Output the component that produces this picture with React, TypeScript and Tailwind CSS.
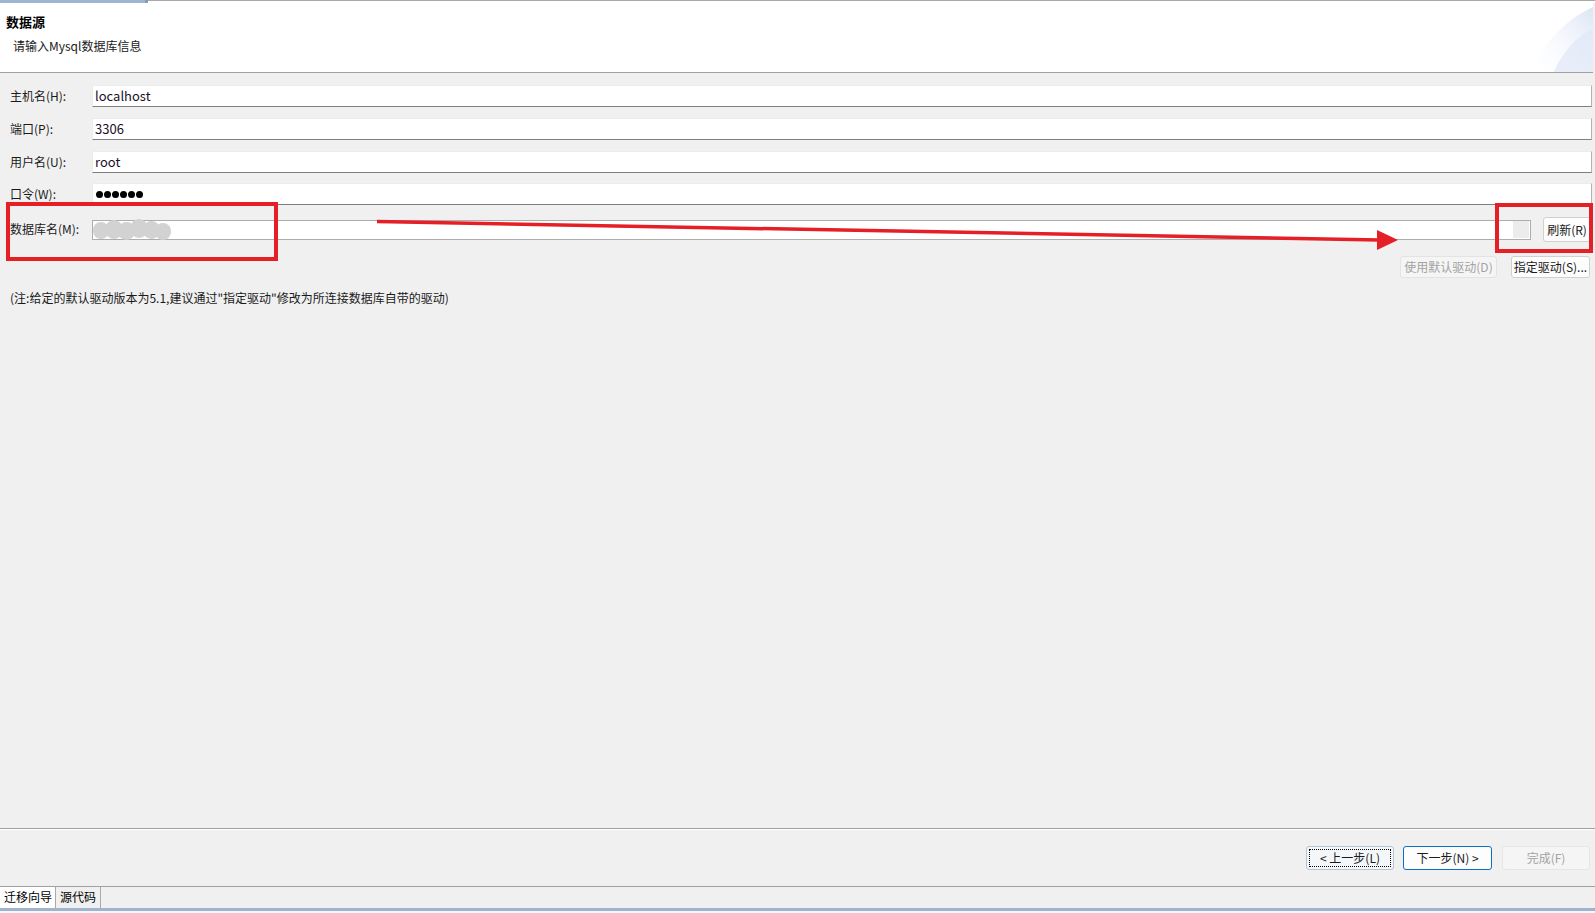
import React from 'react';

const fields = [
  { label: '主机名(H):', value: 'localhost', gap: 'mt-[12px]' },
  { label: '端口(P):', value: '3306', gap: 'mt-[11px]' },
  { label: '用户名(U):', value: 'root', gap: 'mt-[11px]' },
  { label: '口令(W):', value: '', gap: 'mt-[10px]', secret: true },
];

// the blurred-out database name
const blobs = [
  'left-[0px] top-[1px] w-[16px] h-[17px]',
  'left-[12px] top-[-1px] w-[18px] h-[19px]',
  'left-[25px] top-[1px] w-[17px] h-[18px]',
  'left-[37px] top-[-2px] w-[18px] h-[19px]',
  'left-[50px] top-[0px] w-[17px] h-[18px]',
  'left-[62px] top-[2px] w-[16px] h-[17px]',
];

function Field({ label, value, gap, secret }: { label: string; value: string; gap: string; secret?: boolean }) {
  return (
    <div className={`flex items-center h-[22px] ${gap}`}>
      <span className="w-[82px] text-[12px] text-[#1a1a1a] leading-none -mt-[1px]">{label}</span>
      <div className="flex-1 h-[22px] bg-white border border-[#ececec] border-r-[#b4b4b4] border-b-[#7f7f7f] flex items-center pl-[2px]">
        {secret ? (
          <div className="flex gap-[1px] ml-[1px]">
            {[0, 1, 2, 3, 4, 5].map((i) => (
              <span key={i} className="w-[7px] h-[7px] rounded-full bg-black" />
            ))}
          </div>
        ) : (
          <span className="text-[13px] text-[#1b0f2a] leading-none -mt-[1px]">{value}</span>
        )}
      </div>
    </div>
  );
}

export default function App() {
  return (
    <div className="relative w-[1595px] h-[913px] bg-[#f0f0f0] overflow-hidden flex flex-col font-['Noto_Sans_CJK_SC','Microsoft_YaHei',sans-serif] text-black">
      {/* top strip */}
      <div className="h-[3px] flex shrink-0">
        <div className="w-[145px] bg-[#9fb6d2]" />
        <div className="w-[3px] bg-[#8a9bb0]" />
        <div className="flex-1 bg-white border-t border-[#a9a9a9]" />
      </div>

      {/* header */}
      <div className="relative h-[70px] shrink-0 bg-white border-b border-[#a0a0a0] mr-[2px] overflow-hidden">
        <div className="pt-[11px] pl-[6px] text-[13px] font-bold leading-[16px]">数据源</div>
        <div className="mt-[8px] pl-[13px] text-[12px] leading-[16px] text-[#1a1a1a]">请输入Mysql数据库信息</div>
        <svg className="absolute right-0 top-0" width="70" height="70" viewBox="0 0 70 70">
          <defs>
            <linearGradient id="sw" x1="0" y1="1" x2="1" y2="0">
              <stop offset="0" stopColor="#ffffff" stopOpacity="0" />
              <stop offset="1" stopColor="#dbe4f5" />
            </linearGradient>
          </defs>
          <path d="M6 70 Q 30 22 70 4 L70 70 Z" fill="url(#sw)" />
          <path d="M30 70 Q 46 36 70 26 L70 70 Z" fill="#dfe7f6" opacity="0.7" />
        </svg>
      </div>

      {/* form */}
      <div className="flex-1 flex flex-col pl-[10px] pr-[3px]">
        {fields.map((f) => (
          <Field key={f.label} {...f} />
        ))}

        <div className="flex items-center h-[25px] mt-[12px]">
          <span className="w-[82px] text-[12px] text-[#1a1a1a] leading-none -mt-[1px]">数据库名(M):</span>
          <div className="relative flex-1 h-[20px] bg-white border border-[#adadad] flex justify-end">
            {blobs.map((b, i) => (
              <span key={i} className={`absolute ${b} rounded-full bg-[#d2d2d2] blur-[0.5px]`} />
            ))}
            <div className="w-[16px] h-[17px] mt-[0.5px] mr-[1px] bg-[#ececec]" />
          </div>
          <button className="ml-[12px] mr-[1px] w-[48px] h-[25px] rounded-[3px] bg-[#fdfdfd] border border-[#d0d0d0] text-[12px] leading-none text-[#1a1a1a]">
            刷新(R)
          </button>
        </div>

        <div className="flex justify-end items-center h-[22px] mt-[14px] pr-[2px] gap-[14px]">
          <button className="w-[97px] h-[22px] rounded-[3px] bg-[#f5f5f5] border border-[#e3e3e3] text-[12px] leading-none text-[#a3a3a3]">
            使用默认驱动(D)
          </button>
          <button className="w-[79px] h-[22px] rounded-[3px] bg-[#fdfdfd] border border-[#d0d0d0] text-[12px] leading-none text-[#1a1a1a]">
            指定驱动(S)...
          </button>
        </div>

        <div className="mt-[12px] text-[12px] leading-[16px] text-[#1a1a1a]">
          (注:给定的默认驱动版本为5.1,建议通过"指定驱动"修改为所连接数据库自带的驱动)
        </div>
      </div>

      {/* wizard buttons */}
      <div className="shrink-0 border-t border-[#a0a0a0]">
        <div className="h-[1px] bg-white" />
        <div className="h-[56px] flex justify-end pt-[16px] pr-[5px]">
          <button className="w-[88px] h-[24px] rounded-[3px] bg-[#f4f7fa] border border-[#b7c3cf] p-[2px]">
            <span className="flex items-center justify-center w-full h-full border border-dotted border-black text-[12px] leading-none text-[#1a1a1a]">
              &lt; 上一步(L)
            </span>
          </button>
          <button className="ml-[9px] w-[89px] h-[24px] rounded-[3px] bg-[#fdfdfd] border-[1.5px] border-[#0a6fc9] text-[12px] leading-none text-[#1a1a1a]">
            下一步(N) &gt;
          </button>
          <button className="ml-[10px] w-[88px] h-[24px] rounded-[3px] bg-[#f5f5f5] border border-[#e6e6e6] text-[12px] leading-none text-[#a3a3a3]">
            完成(F)
          </button>
        </div>
      </div>

      {/* tabs */}
      <div className="shrink-0 h-[22px] border-t border-[#a0a0a0] flex">
        <div className="w-[55px] h-[21px] bg-white flex items-center pl-[4px] pb-[2px] text-[12px] leading-none">迁移向导</div>
        <div className="w-[46px] h-[21px] border-x border-[#a9a9a9] flex items-center pl-[4px] pb-[2px] text-[12px] leading-none">源代码</div>
      </div>
      <div className="shrink-0 h-[3px] bg-[#9db3cf]" />
      <div className="shrink-0 h-[2px] bg-[#f7f7f7]" />

      {/* red annotations */}
      <svg className="absolute inset-0 pointer-events-none" width="1595" height="913" viewBox="0 0 1595 913">
        <rect x="8" y="204" width="268" height="55" fill="none" stroke="#e61e26" strokeWidth="4" />
        <rect x="1497" y="205" width="94" height="46" fill="none" stroke="#e61e26" strokeWidth="4" />
        <line x1="377" y1="221.5" x2="1380" y2="240" stroke="#e61e26" strokeWidth="3.5" />
        <polygon points="1377,230 1398,240 1377,250" fill="#e61e26" />
      </svg>
    </div>
  );
}
